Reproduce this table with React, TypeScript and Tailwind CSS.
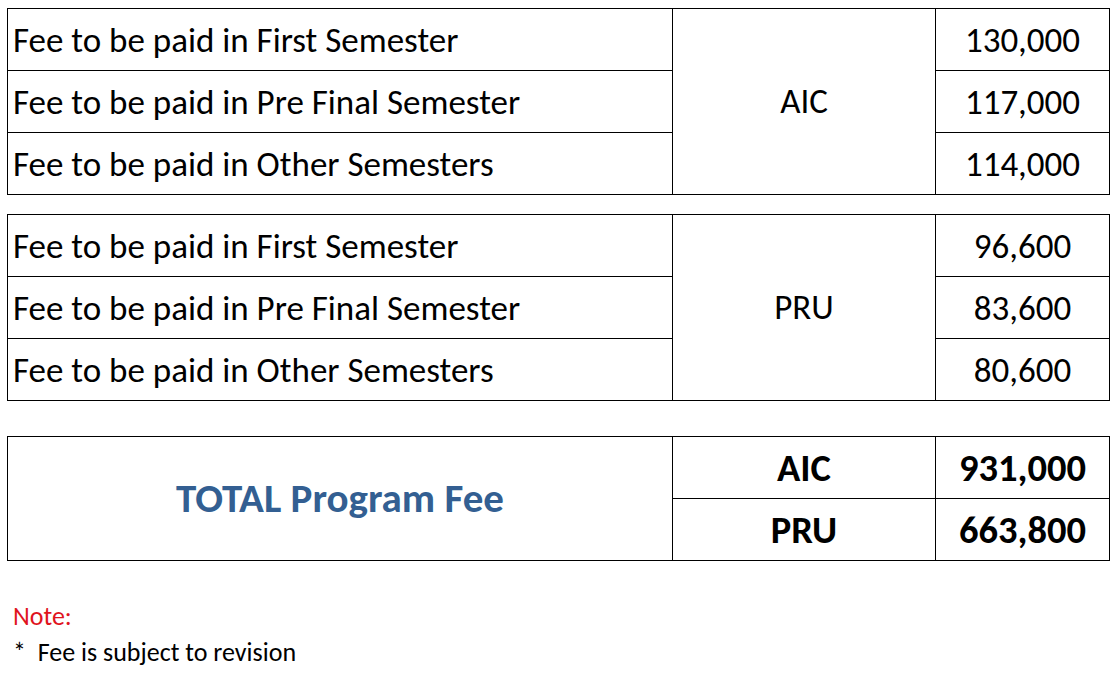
import React from "react";

const font = { fontFamily: "Calibri, Carlito, 'Open Sans', sans-serif" };

function FeeTable({ label, values }: { label: string; values: string[] }) {
  const rows = [
    "Fee to be paid in First Semester",
    "Fee to be paid in Pre Final Semester",
    "Fee to be paid in Other Semesters",
  ];
  return (
    <div className="grid grid-cols-[665px_263px_174px] grid-rows-[62px_62px_62px] border-l border-t border-black w-[1103px]">
      {rows.map((r, i) => (
        <React.Fragment key={r}>
          <div
            className="border-r border-b border-black pl-[5px] flex items-center pt-[2px] text-[35px] text-black whitespace-nowrap"
            style={{ gridColumn: 1, gridRow: i + 1 }}
          >
            {r}
          </div>
          <div
            className="border-r border-b border-black flex items-center justify-center pt-[2px] text-[35px] text-black"
            style={{ gridColumn: 3, gridRow: i + 1 }}
          >
            {values[i]}
          </div>
        </React.Fragment>
      ))}
      <div
        className="border-r border-b border-black flex items-center justify-center text-[35px] text-black"
        style={{ gridColumn: 2, gridRow: "1 / span 3" }}
      >
        {label}
      </div>
    </div>
  );
}

export default function App() {
  return (
    <div className="w-[1114px] h-[688px] bg-white pl-[7px] pt-[8px] overflow-hidden" style={font}>
      <FeeTable label="AIC" values={["130,000", "117,000", "114,000"]} />
      <div className="h-[19px]" />
      <FeeTable label="PRU" values={["96,600", "83,600", "80,600"]} />
      <div className="h-[35px]" />
      <div className="grid grid-cols-[665px_263px_174px] grid-rows-[62px_62px] border-l border-t border-black w-[1103px]">
        <div className="row-span-2 border-r border-b border-black flex items-center justify-center pt-[1px] text-[41px] font-bold text-[#335f92] whitespace-nowrap">
          TOTAL Program Fee
        </div>
        <div className="border-r border-b border-black flex items-center justify-center text-[38.5px] font-bold text-black">
          AIC
        </div>
        <div className="border-r border-b border-black flex items-center justify-center text-[38.5px] font-bold text-black">
          931,000
        </div>
        <div className="border-r border-b border-black flex items-center justify-center text-[38.5px] font-bold text-black">
          PRU
        </div>
        <div className="border-r border-b border-black flex items-center justify-center text-[38.5px] font-bold text-black">
          663,800
        </div>
      </div>
      <div className="mt-[37px] pl-[6px] text-[26px] leading-[36px] text-[#e0141e]">Note:</div>
      <div className="pl-[6px] text-[26px] leading-[36px] text-black whitespace-pre">*  Fee is subject to revision</div>
    </div>
  );
}
